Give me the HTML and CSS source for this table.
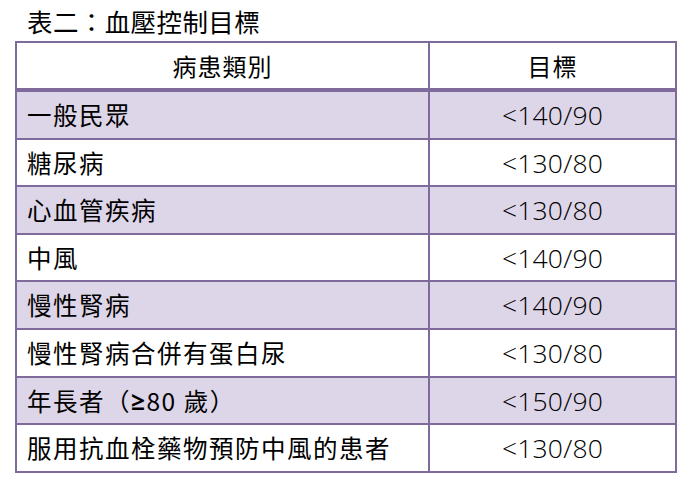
FILE: index.html
```html
<!DOCTYPE html>
<html lang="zh-Hant">
<head>
<meta charset="utf-8">
<title>表二：血壓控制目標</title>
<link rel="stylesheet" href="styles.css">
</head>
<body>
<h1 class="title">表二：血壓控制目標</h1>
<div class="table">
  <div class="row head">
    <div class="cell name">病患類別</div>
    <div class="cell target">目標</div>
  </div>
  <div class="row alt">
    <div class="cell name">一般民眾</div>
    <div class="cell target">&lt;140/90</div>
  </div>
  <div class="row">
    <div class="cell name">糖尿病</div>
    <div class="cell target">&lt;130/80</div>
  </div>
  <div class="row alt">
    <div class="cell name">心血管疾病</div>
    <div class="cell target">&lt;130/80</div>
  </div>
  <div class="row">
    <div class="cell name">中風</div>
    <div class="cell target">&lt;140/90</div>
  </div>
  <div class="row alt">
    <div class="cell name">慢性腎病</div>
    <div class="cell target">&lt;140/90</div>
  </div>
  <div class="row">
    <div class="cell name">慢性腎病合併有蛋白尿</div>
    <div class="cell target">&lt;130/80</div>
  </div>
  <div class="row alt">
    <div class="cell name">年長者（<b class="ge">≥</b>80 歲）</div>
    <div class="cell target">&lt;150/90</div>
  </div>
  <div class="row last">
    <div class="cell name">服用抗血栓藥物預防中風的患者</div>
    <div class="cell target">&lt;130/80</div>
  </div>
</div>
</body>
</html>
```

FILE: styles.css
```css
html, body {
  margin: 0;
  padding: 0;
  background: #ffffff;
}

body {
  font-family: "Noto Sans CJK TC", "Noto Sans", sans-serif;
  color: #000000;
}

.title {
  margin: 0;
  height: 41px;
  padding: 5px 0 0 27px;
  box-sizing: border-box;
  font-size: 25.5px;
  letter-spacing: 0.4px;
  line-height: 32px;
  font-weight: 400;
}

.table {
  margin-left: 15px;
  width: 662px;
  box-sizing: border-box;
  border: 2px solid #7f6b9b;
}

.row {
  display: grid;
  grid-template-columns: 413px 245px;
  height: 47.6px;
  box-sizing: border-box;
  border-bottom: 2px solid #7f6b9b;
}

.row.head {
  height: 49px;
  border-bottom-width: 4px;
}

.row.last {
  height: 45.6px;
  border-bottom: 0;
}

.row.alt {
  background: #ddd5e8;
}

.cell {
  display: flex;
  align-items: center;
  font-size: 24.5px;
  letter-spacing: 1.5px;
  line-height: 1;
  padding-top: 1px;
}

.cell.name {
  border-right: 2px solid #7f6b9b;
  padding-left: 10px;
}

.cell.target {
  justify-content: center;
  font-family: "Open Sans", "Noto Sans CJK TC", sans-serif;
  font-weight: 350;
  font-size: 26.5px;
  letter-spacing: 0.2px;
}

.head .cell {
  justify-content: center;
  padding-left: 0;
  font-family: "Noto Sans CJK TC", sans-serif;
  font-weight: 400;
  font-size: 24px;
  letter-spacing: 1px;
}

.ge {
  font-weight: 700;
  font-family: "Open Sans", sans-serif;
}
```
